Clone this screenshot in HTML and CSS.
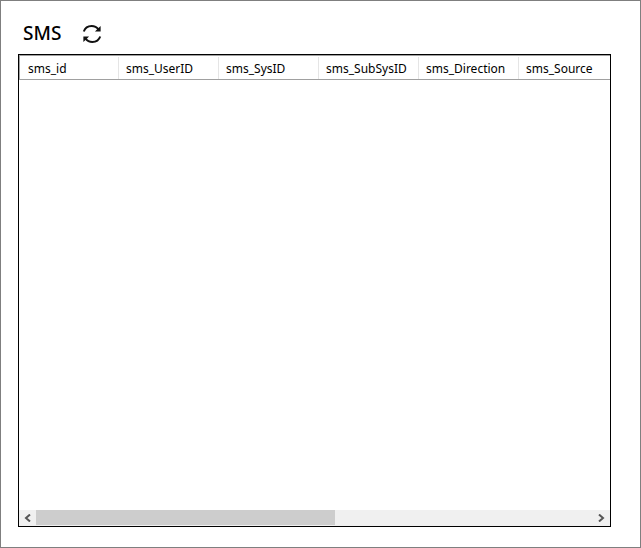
FILE: index.html
```html
<!DOCTYPE html>
<html lang="en">
<head>
    <meta charset="utf-8">
    <title>SMS</title>
    <link rel="stylesheet" href="styles.css">
</head>
<body>
    <header class="title-bar">
        <h1>SMS</h1>
        <button class="refresh" title="Refresh">
            <svg width="20" height="20" viewBox="0 0 20 20" fill="none" stroke="#111" stroke-width="2">
                <path d="M1.800 7.500C3 4 6 2 9.600 2c3 0 5.300 1.300 7 3.700"></path>
                <path d="M18.200 12.500c-1.200 3.500-4.200 5.500-7.800 5.500-3 0-5.300-1.300-7-3.700"></path>
                <path d="M18.600 2v5.600h-5.700z" fill="#111" stroke="none"></path>
                <path d="M1.400 18v-5.600h5.700z" fill="#111" stroke="none"></path>
            </svg>
        </button>
    </header>

    <main class="grid">
        <div class="grid-view">
            <table>
                <thead>
                    <tr>
                        <th>sms_id</th>
                        <th>sms_UserID</th>
                        <th>sms_SysID</th>
                        <th>sms_SubSysID</th>
                        <th>sms_Direction</th>
                        <th>sms_Source</th>
                        <th></th>
                    </tr>
                </thead>
                <tbody></tbody>
            </table>
        </div>
        <div class="scrollbar">
            <button title="Scroll left">
                <svg width="7" height="8" viewBox="0 0 7 8" fill="none" stroke="#555" stroke-width="2">
                    <path d="M6 0.500L2 4l4 3.500"></path>
                </svg>
            </button>
            <div class="track">
                <div class="thumb"></div>
            </div>
            <button title="Scroll right">
                <svg width="7" height="8" viewBox="0 0 7 8" fill="none" stroke="#555" stroke-width="2">
                    <path d="M1 0.500L5 4l-4 3.500"></path>
                </svg>
            </button>
        </div>
    </main>
</body>
</html>
```
FILE: styles.css
```css
* {
    box-sizing: border-box;
}

body {
    display: flex;
    flex-direction: column;
    height: 100vh;
    margin: 0;
    padding: 17px 29px 20px 17px;
    border: 1px solid #7f7f7f;
    background: #fff;
    color: #000;
    font-family: "Noto Sans", "Open Sans", sans-serif;
    font-size: 12px;
}

button {
    display: flex;
    align-items: center;
    justify-content: center;
    padding: 0;
    border: none;
    background: transparent;
}

.title-bar {
    display: flex;
    align-items: center;
    gap: 21px;
    height: 36px;
    padding: 0 0 4px 5px;
}

.title-bar h1 {
    margin: 0;
    padding-bottom: 3px;
    font-size: 19px;
    font-weight: 500;
    line-height: 24px;
}

.refresh {
    width: 20px;
    height: 20px;
}

/* data grid */
.grid {
    display: flex;
    flex: 1;
    flex-direction: column;
    min-height: 0;
    border: 1px solid #000;
}

.grid-view {
    flex: 1;
    overflow: hidden;
}

table {
    width: 100%;
    min-width: 700px;
    table-layout: fixed;
    border-collapse: separate;
    border-spacing: 0;
    border-top: 1px solid #a0a0a0;
}

th {
    width: 100px;
    height: 24px;
    padding: 2px 0 0 7px;
    border-bottom: 1px solid #a0a0a0;
    background: linear-gradient(#e5e5e5, #e5e5e5) right bottom / 1px 22px no-repeat;
    font-weight: 400;
    line-height: 16px;
    text-align: left;
    white-space: nowrap;
}

th:first-child {
    padding-left: 8px;
    border-left: 1px solid #a0a0a0;
}

th:last-child {
    width: auto;
    background: none;
}

/* horizontal scrollbar */
.scrollbar {
    display: flex;
    height: 16px;
    background: #f0f0f0;
}

.scrollbar button {
    width: 17px;
    height: 15px;
}

.track {
    flex: 1;
}

.thumb {
    width: 53.7%;
    height: 15px;
    background: #cdcdcd;
}
```
